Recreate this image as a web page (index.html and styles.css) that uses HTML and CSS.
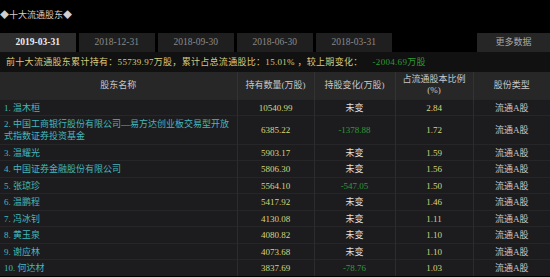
FILE: index.html
```html
<!DOCTYPE html>
<html lang="zh-CN">
<head>
<meta charset="utf-8">
<link rel="stylesheet" href="styles.css">
</head>
<body>
<div class="page">
  <div class="title">◆十大流通股东◆</div>
  <div class="tabs">
    <div class="tab active">2019-03-31</div>
    <div class="tab">2018-12-31</div>
    <div class="tab">2018-09-30</div>
    <div class="tab">2018-06-30</div>
    <div class="tab">2018-03-31</div>
    <div class="tab more">更多数据</div>
  </div>
  <div class="summary">前十大流通股东累计持有：55739.97万股，累计占总流通股比：15.01%&nbsp;，较上期变化：<span class="down delta">-2004.69万股</span></div>
  <table class="grid">
    <colgroup>
      <col class="c1"><col class="c2"><col class="c3"><col class="c4"><col class="c5">
    </colgroup>
    <thead>
      <tr>
        <th>股东名称</th>
        <th>持有数量(万股)</th>
        <th>持股变化(万股)</th>
        <th>占流通股本比例<br>(%)</th>
        <th>股份类型</th>
      </tr>
    </thead>
    <tbody>
      <tr><td class="name">1. 温木桓</td><td class="num">10540.99</td><td class="chg">未变</td><td class="num">2.84</td><td class="type">流通A股</td></tr>
      <tr><td class="name">2. 中国工商银行股份有限公司—易方达创业板交易型开放式指数证券投资基金</td><td class="num">6385.22</td><td class="chg down">-1378.88</td><td class="num">1.72</td><td class="type">流通A股</td></tr>
      <tr><td class="name">3. 温耀光</td><td class="num">5903.17</td><td class="chg">未变</td><td class="num">1.59</td><td class="type">流通A股</td></tr>
      <tr><td class="name">4. 中国证券金融股份有限公司</td><td class="num">5806.30</td><td class="chg">未变</td><td class="num">1.56</td><td class="type">流通A股</td></tr>
      <tr><td class="name">5. 张琼珍</td><td class="num">5564.10</td><td class="chg down">-547.05</td><td class="num">1.50</td><td class="type">流通A股</td></tr>
      <tr><td class="name">6. 温鹏程</td><td class="num">5417.92</td><td class="chg">未变</td><td class="num">1.46</td><td class="type">流通A股</td></tr>
      <tr><td class="name">7. 冯冰钊</td><td class="num">4130.08</td><td class="chg">未变</td><td class="num">1.11</td><td class="type">流通A股</td></tr>
      <tr><td class="name">8. 黄玉泉</td><td class="num">4080.82</td><td class="chg">未变</td><td class="num">1.10</td><td class="type">流通A股</td></tr>
      <tr><td class="name">9. 谢应林</td><td class="num">4073.68</td><td class="chg">未变</td><td class="num">1.10</td><td class="type">流通A股</td></tr>
      <tr><td class="name">10. 何达材</td><td class="num">3837.69</td><td class="chg down">-78.76</td><td class="num">1.03</td><td class="type">流通A股</td></tr>
    </tbody>
  </table>
</div>
</body>
</html>
```
FILE: styles.css
```css
html, body {
  margin: 0;
  padding: 0;
  background: #000;
}
.page {
  width: 550px;
  font-family: "Liberation Serif", "Noto Sans CJK SC", serif;
  font-size: 9px;
  color: #cfcfcf;
}
.title {
  height: 33px;
  box-sizing: border-box;
  padding-top: 10px;
  line-height: 11px;
  color: #cfcfcf;
}
.tabs {
  display: flex;
  gap: 3.5px;
  height: 19px;
}
.tab {
  width: 75.5px;
  background: #1f1f1f;
  color: #8a8a8a;
  text-align: center;
  line-height: 19px;
  font-size: 9.5px;
}
.tab.active {
  background: #2e2e2e;
  color: #ececec;
  font-weight: bold;
}
.tab.more {
  margin-left: auto;
  width: 73px;
  background: #262626;
  color: #a8a8a8;
  font-size: 9px;
}
.summary {
  height: 20px;
  line-height: 20px;
  padding-left: 6px;
  background: #111;
  color: #d9cc7e;
  letter-spacing: 0.3px;
}
.down {
  color: #2f9a36;
}
.delta {
  margin-left: 10px;
}
.grid {
  width: 550px;
  border-collapse: collapse;
  table-layout: fixed;
  background: #1c1c1f;
}
.c1 { width: 237px; }
.c2 { width: 77px; }
.c3 { width: 81px; }
.c4 { width: 78px; }
.c5 { width: 77px; }
.grid th {
  height: 27px;
  box-sizing: border-box;
  padding: 0;
  background: #272728;
  color: #c8c8c8;
  font-weight: normal;
  line-height: 11px;
  border-left: 1px solid #333;
}
.grid td {
  padding: 2px 3px 1.5px;
  line-height: 12px;
  border-left: 1px solid #2c2c2e;
  border-top: 1px solid #262628;
  text-align: center;
}
.grid th:first-child, .grid td:first-child {
  border-left: none;
}
.grid td.name {
  text-align: left;
  padding-left: 4px;
  padding-right: 4px;
  color: #43b8bc;
}
.grid td.num {
  color: #d8d57a;
}
.grid td.chg {
  color: #e2e2e2;
}
.grid td.chg.down {
  color: #2f9a36;
}
.grid td.type {
  color: #c9c9c9;
}
```
